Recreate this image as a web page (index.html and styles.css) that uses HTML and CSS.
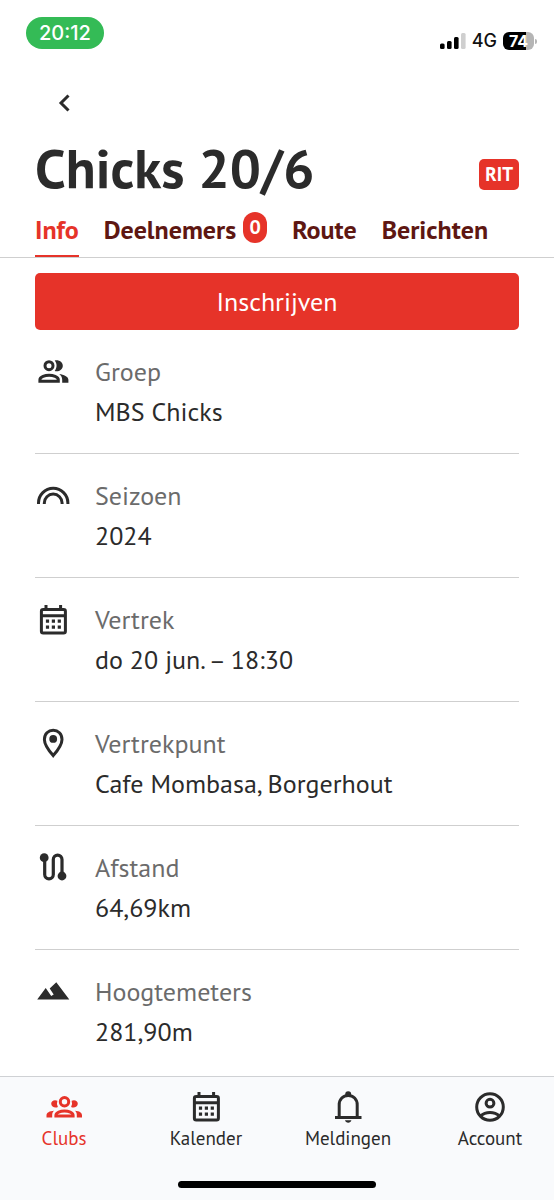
FILE: index.html
```html
<!DOCTYPE html>
<html lang="nl">
<head>
<meta charset="utf-8">
<meta name="viewport" content="width=device-width, initial-scale=1">
<title>Chicks 20/6</title>
<link rel="stylesheet" href="styles.css">
</head>
<body>
<div class="page">
  <div class="status">
    <span class="status-time">20:12</span>
    <div class="status-right">
      <svg class="signal" width="26" height="16" viewBox="0 0 26 16" aria-hidden="true">
        <rect x="0" y="10.5" width="4.6" height="5.5" rx="1.5"/>
        <rect x="7" y="8" width="4.6" height="8" rx="1.5"/>
        <rect x="14" y="4" width="4.6" height="12" rx="1.5"/>
        <rect x="21" y="0" width="4.6" height="16" rx="1.5" fill="#cfcfcf"/>
      </svg>
      <span class="network">4G</span>
      <span class="battery"><span class="battery-body">74</span><span class="battery-tip"></span></span>
    </div>
  </div>

  <header class="header">
    <button class="back" type="button" aria-label="Terug">
      <svg width="12" height="18" viewBox="0 0 12 18" aria-hidden="true"><path d="M10.500 1.500 3 9l7.500 7.500" fill="none" stroke="currentColor" stroke-width="3"/></svg>
    </button>
    <div class="title-row">
      <h1 class="title">Chicks 20/6</h1>
      <span class="tag">RIT</span>
    </div>
    <nav class="tabs">
      <a class="tab tab-active" href="#info">Info</a>
      <a class="tab" href="#deelnemers">Deelnemers<span class="count">0</span></a>
      <a class="tab" href="#route">Route</a>
      <a class="tab" href="#berichten">Berichten</a>
    </nav>
  </header>

  <main class="content">
    <button class="primary" type="button">Inschrijven</button>
    <dl class="details">
      <div class="row">
        <svg class="icon" viewBox="0 0 36 36" aria-hidden="true">
          <circle cx="14" cy="11.700" r="4" fill="none" stroke="currentColor" stroke-width="3"/>
          <path fill="currentColor" d="M19.700 6.500c3.400-1.200 8.100 1 8.100 5.200s-4.700 6.400-8.100 5.200c2.500-3.200 2.500-7.200 0-10.400z"/>
          <path fill="none" stroke="currentColor" stroke-width="3" d="M4.900 27.200v-1.500c0-3 5.300-4.500 9.200-4.500s9.200 1.500 9.200 4.500v1.500z"/>
          <path fill="currentColor" d="M24.300 20c4.300.6 9.100 2.500 9.100 5.800v2.900h-6.200v-2.900c0-2.500-1.100-4.300-2.900-5.800z"/>
        </svg>
        <dt>Groep</dt><dd>MBS Chicks</dd>
      </div>
      <div class="row">
        <svg class="icon" viewBox="0 0 36 36" aria-hidden="true">
          <path fill="none" stroke="currentColor" stroke-width="3" d="M3.500 26v-1a14.700 14.700 0 0 1 29.400 0v1M9.300 26v-1a8.900 8.900 0 0 1 17.800 0v1"/>
        </svg>
        <dt>Seizoen</dt><dd>2024</dd>
      </div>
      <div class="row">
        <svg class="icon" viewBox="0 0 36 36" aria-hidden="true">
          <g id="calendar">
            <rect x="6.400" y="7.400" width="24" height="23.600" rx="1.800" fill="none" stroke="currentColor" stroke-width="3"/>
            <path fill="none" stroke="currentColor" stroke-width="3" d="M6.400 13.700h24M11 3v4M25.600 3v4"/>
            <path fill="none" stroke="currentColor" stroke-width="3.200" stroke-dasharray="3.200 2.700" d="M10.900 19.200h16M10.900 25.200h16"/>
          </g>
        </svg>
        <dt>Vertrek</dt><dd>do 20 jun. – 18:30</dd>
      </div>
      <div class="row">
        <svg class="icon" viewBox="0 0 36 36" aria-hidden="true">
          <path fill="none" stroke="currentColor" stroke-width="3" d="M18.200 29.600c-5.800-6.700-8.800-11.600-8.800-16.200 0-5.500 3.900-9.200 8.800-9.200s8.800 3.700 8.800 9.200c0 4.600-3 9.500-8.800 16.200z"/>
          <circle cx="18.200" cy="12.900" r="3.900" fill="currentColor"/>
        </svg>
        <dt>Vertrekpunt</dt><dd>Cafe Mombasa, Borgerhout</dd>
      </div>
      <div class="row">
        <svg class="icon" viewBox="0 0 36 36" aria-hidden="true">
          <circle cx="9.200" cy="7.700" r="4.400" fill="currentColor"/>
          <circle cx="27" cy="26" r="4.400" fill="currentColor"/>
          <path fill="none" stroke="currentColor" stroke-width="3.200" d="M9.700 8v16.500a4.300 4.300 0 0 0 8.600 0V9.500a4.350 4.350 0 0 1 8.700 0V25"/>
        </svg>
        <dt>Afstand</dt><dd>64,69km</dd>
      </div>
      <div class="row">
        <svg class="icon" viewBox="0 0 36 36" aria-hidden="true">
          <path fill="currentColor" d="M2.200 25.600 10.700 14l5.500 8 2.500-1.600-4-6L21.300 8.200l13 17.400z"/>
        </svg>
        <dt>Hoogtemeters</dt><dd>281,90m</dd>
      </div>
    </dl>
  </main>

  <footer class="bottom">
    <nav class="menu">
      <a class="menu-item menu-active" href="#clubs">
        <svg class="icon" viewBox="0 0 36 36" aria-hidden="true">
          <circle cx="18.500" cy="12.700" r="4.200" fill="none" stroke="currentColor" stroke-width="3"/>
          <path fill="none" stroke="currentColor" stroke-width="3" d="M9.900 26.900v-.6c0-2.700 4.600-4.200 8.600-4.200s8.600 1.500 8.600 4.200v.6z"/>
          <path fill="currentColor" d="M11.400 11.800a7.600 7.600 0 0 0 .5 6.200c-2.700 1.600-6.700-.2-6.700-3.300 0-2.800 3.300-4.500 6.200-2.900zM25.600 11.800a7.600 7.600 0 0 1-.5 6.200c2.700 1.600 6.700-.2 6.700-3.300 0-2.800-3.300-4.500-6.200-2.900zM8 21.700c-4.500.2-7.500 2-7.500 4.600v2.100h5.700v-2.300c0-1.800.4-3.200 1.800-4.400zM29 21.700c4.500.2 7 2 7 4.600v2.100h-5.200v-2.300c0-1.800-.4-3.200-1.800-4.400z"/>
        </svg>
        Clubs
      </a>
      <a class="menu-item" href="#kalender">
        <svg class="icon" viewBox="0 0 36 36" aria-hidden="true"><use href="#calendar"/></svg>
        Kalender
      </a>
      <a class="menu-item" href="#meldingen">
        <svg class="icon" viewBox="0 0 36 36" aria-hidden="true">
          <path fill="none" stroke="currentColor" stroke-width="3" d="M5 28.500h26.500M9.200 28.500V15.700c0-5.500 3.900-9.300 9-9.300s9 3.800 9 9.300v12.800"/>
          <path fill="currentColor" d="M15.200 7V5.300a3 3 0 0 1 6 0V7zM15 31.300h6.400c-.5 3.200-5.900 3.200-6.400 0z"/>
        </svg>
        Meldingen
      </a>
      <a class="menu-item" href="#account">
        <svg class="icon" viewBox="0 0 36 36" aria-hidden="true">
          <g fill="none" stroke="currentColor" stroke-width="3">
            <circle cx="18" cy="18" r="13.300"/>
            <circle cx="18" cy="14.200" r="3.900"/>
            <path d="M8.500 27.200c5.200-5 13.800-5 19 0"/>
          </g>
        </svg>
        Account
      </a>
    </nav>
    <div class="home-bar"></div>
  </footer>
</div>
</body>
</html>
```

FILE: styles.css
```css
* {
  box-sizing: border-box;
}

body {
  margin: 0;
  background: #fff;
  color: #2b2b2b;
  font-family: "PT Sans", "Noto Sans", sans-serif;
}

button {
  border: 0;
  font: inherit;
  cursor: pointer;
}

a {
  color: inherit;
  text-decoration: none;
}

.page {
  display: flex;
  flex-direction: column;
  min-height: 100vh;
}

.status {
  display: flex;
  align-items: flex-start;
  justify-content: space-between;
  padding: 17px 17px 0 26px;
  font-family: Inter, sans-serif;
}

.status-time {
  padding: 0 13px;
  border-radius: 16px;
  background: #34bb56;
  color: #fff;
  font-size: 20px;
  font-weight: 500;
  line-height: 32px;
}

.status-right {
  display: flex;
  align-items: center;
  gap: 6px;
  padding-top: 14px;
  color: #111;
  line-height: 20px;
}

.network {
  font-size: 18px;
  font-weight: 500;
}

.battery {
  display: flex;
  align-items: center;
  gap: 1px;
}

.battery-body {
  width: 31px;
  border-radius: 6px;
  background: linear-gradient(to right, #000 74%, #b5b5b5 74%);
  color: #fff;
  font-size: 16px;
  font-weight: 700;
  line-height: 18px;
  text-align: center;
}

.battery-tip {
  width: 2px;
  height: 5px;
  border-radius: 0 2px 2px 0;
  background: #b5b5b5;
}

.header {
  padding: 35px 35px 0;
  border-bottom: 1px solid #cfcfcf;
}

.back {
  display: flex;
  margin-left: 23px;
  padding: 8px 0;
  background: none;
  color: #2b2b2b;
}

.title-row {
  display: flex;
  align-items: center;
  justify-content: space-between;
  height: 86px;
  padding-top: 10px;
}

.title {
  margin: 0;
  font-size: 55px;
  font-weight: 700;
  line-height: 64px;
}

.tag {
  margin-top: 12px;
  padding: 0 6px;
  border-radius: 5px;
  background: #e63329;
  color: #fff;
  font-size: 19px;
  font-weight: 700;
  line-height: 31px;
}

.tabs {
  display: flex;
  gap: 25px;
  color: #5e1712;
  font-size: 26px;
  font-weight: 700;
  line-height: 48px;
}

.tab {
  display: flex;
  gap: 7px;
  padding-bottom: 1px;
  border-bottom: 2px solid transparent;
}

.tab-active {
  border-color: #e63329;
  color: #e63329;
}

.count {
  align-self: flex-start;
  margin-top: 6px;
  width: 24px;
  border-radius: 12px;
  background: #e63329;
  color: #fff;
  font-size: 20px;
  line-height: 31px;
  text-align: center;
}

.content {
  flex: 1;
  padding: 15px 35px 0;
}

.primary {
  display: block;
  width: 100%;
  border-radius: 5px;
  background: #e63329;
  color: #fff;
  font-size: 26px;
  line-height: 57px;
  padding: 0;
}

.details {
  margin: 0;
}

.row {
  display: grid;
  grid-template-columns: 36px 1fr;
  column-gap: 24px;
  padding: 22px 0 21px;
  border-bottom: 1px solid #cfcfcf;
  font-size: 26px;
  line-height: 40px;
}

.row:last-child {
  padding-bottom: 0;
  border: 0;
}

.row .icon {
  align-self: center;
}

.row dt {
  color: #6b6b6b;
}

.row dd {
  grid-column: 2;
  margin: 0;
}

.icon {
  display: block;
  width: 36px;
  height: 36px;
}

.bottom {
  padding: 12px 14px;
  border-top: 1px solid #cfd1d4;
  background: #f9fafc;
}

.menu {
  display: flex;
  justify-content: space-between;
}

.menu-item {
  display: flex;
  flex-direction: column;
  align-items: center;
  width: 100px;
  font-size: 19px;
  line-height: 26px;
}

.menu-active {
  color: #e63329;
}

.home-bar {
  width: 198px;
  height: 7px;
  margin: 30px auto 0;
  border-radius: 4px;
  background: #000;
}
```
